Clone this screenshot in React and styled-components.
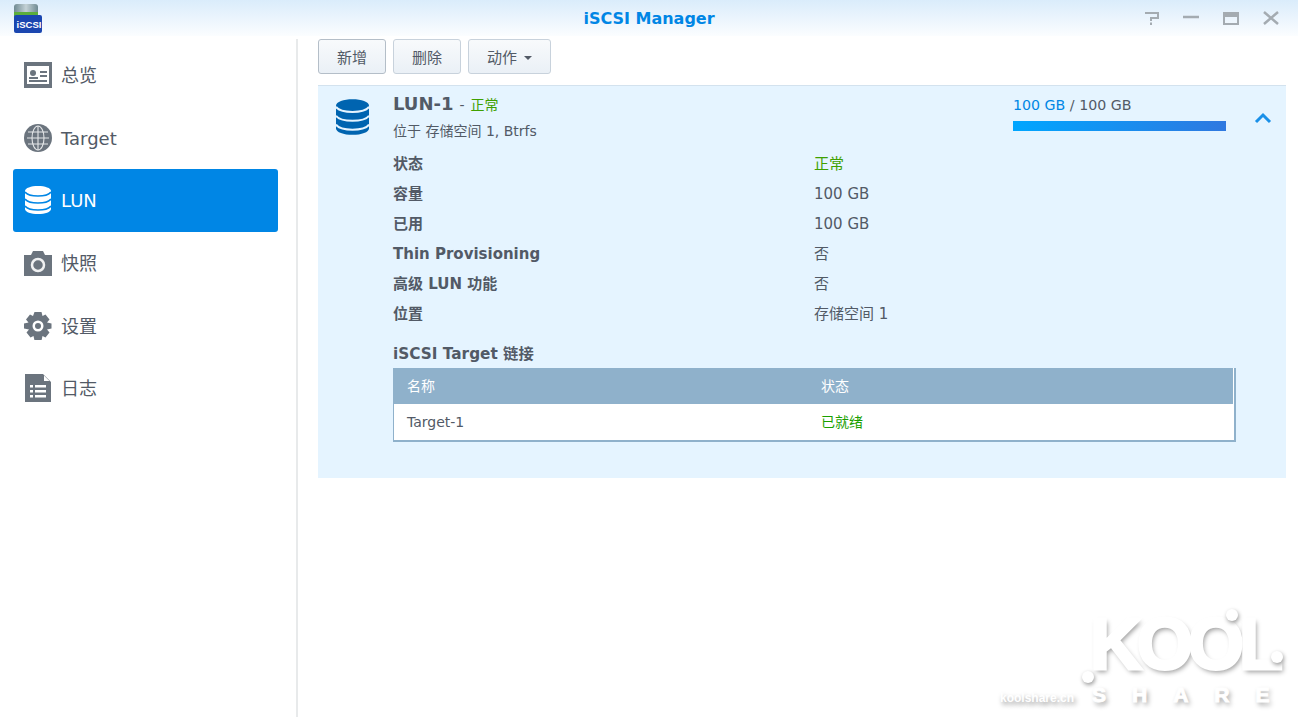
import React from "react";
import styled, { createGlobalStyle } from "styled-components";

const FONT = `"DejaVu Sans", "Noto Sans CJK SC", sans-serif`;

const GlobalStyle = createGlobalStyle`
  html, body {
    margin: 0;
    height: 100%;
    background: #fff;
    overflow: hidden;
  }
  body {
    font-family: ${FONT};
    color: #525a66;
  }
`;

const Window = styled.div`
  position: relative;
  width: 1298px;
  height: 717px;
  overflow: hidden;
  background: #fff;
`;

const TitleBar = styled.header`
  position: relative;
  height: 36px;
  display: flex;
  align-items: center;
  justify-content: center;
  background: linear-gradient(#daecfb, #fbfdff);
`;
const Title = styled.h1`
  margin: 0;
  font-size: 16px;
  font-weight: 700;
  color: #0086e5;
`;
const AppLogo = styled.svg`
  position: absolute;
  left: 13px;
  top: 4px;
`;
const WinButtons = styled.div`
  position: absolute;
  right: 19px;
  top: 11px;
  display: flex;
  gap: 24px;
`;

const Body = styled.div`
  display: flex;
  height: 681px;
`;
const Sidebar = styled.nav`
  flex: none;
  width: 298px;
  margin-top: 3px;
  padding: 5px 18px 0 13px;
  box-sizing: border-box;
  border-right: 2px solid #e8eaeb;
`;
const NavItem = styled.div`
  display: flex;
  align-items: center;
  gap: 9px;
  height: 62.6px;
  padding-left: 11px;
  border-radius: 3px;
  font-size: 18px;
  line-height: 24px;
  color: ${(p) => (p.$active ? "#fff" : "#525a66")};
  background: ${(p) => (p.$active ? "#0086e5" : "transparent")};
`;
const NavIcon = styled.span`
  display: flex;
  justify-content: center;
  width: 28px;
`;
const NavLabel = styled.span`
  padding-top: 2px;
`;

const Main = styled.main`
  flex: 1;
  padding: 3px 12px 0 20px;
  min-width: 0;
`;
const Toolbar = styled.div`
  display: flex;
  gap: 7px;
  margin-bottom: 11px;
`;
const Button = styled.button`
  height: 35px;
  width: ${(p) => p.$width}px;
  display: flex;
  align-items: center;
  justify-content: center;
  gap: 7px;
  padding: 0;
  font-family: ${FONT};
  font-size: 15px;
  color: #525a66;
  background: linear-gradient(#f8fafc, #eaf0f6);
  border: 1px solid ${(p) => (p.$primary ? "#b4bec8" : "#c8d2dc")};
  border-radius: 3px;
`;
const Caret = styled.span`
  width: 0;
  height: 0;
  margin-top: 3px;
  border-left: 4px solid transparent;
  border-right: 4px solid transparent;
  border-top: 4px solid #525a66;
`;

const Panel = styled.section`
  height: 393px;
  box-sizing: border-box;
  background: #e5f4ff;
  border-top: 1px solid #d3e2ee;
  display: grid;
  grid-template-columns: 75px 1fr;
`;
const PanelIcon = styled.div`
  padding: 12px 0 0 18px;
`;
const PanelContent = styled.div`
  position: relative;
  padding-top: 7px;
`;
const Heading = styled.div`
  display: flex;
  align-items: baseline;
  gap: 6px;
  height: 22px;
  font-size: 14px;
`;
const LunName = styled.span`
  font-size: 18px;
  font-weight: 700;
`;
const Green = styled.span`
  color: #3fa000;
`;
const SubHeading = styled.div`
  margin-top: 7px;
  height: 18px;
  font-size: 14px;
  line-height: 18px;
`;
const Usage = styled.div`
  position: absolute;
  left: 620px;
  top: 11px;
  width: 213px;
  font-size: 14.2px;
`;
const UsageUsed = styled.span`
  color: #0086e5;
`;
const UsageBar = styled.div`
  height: 10px;
  margin-top: 8px;
  background: linear-gradient(90deg, #00a6ff, #2f78e0);
`;
const Collapse = styled.svg`
  position: absolute;
  left: 861px;
  top: 26px;
`;
const InfoGrid = styled.dl`
  display: grid;
  grid-template-columns: 421px 1fr;
  grid-auto-rows: 30px;
  align-items: center;
  margin: 9px 0 0;
  font-size: 15px;
  line-height: 20px;
`;
const InfoLabel = styled.dt`
  font-weight: 700;
`;
const InfoValue = styled.dd`
  margin: 0;
  color: ${(p) => (p.$ok ? "#3fa000" : "inherit")};
`;
const SectionTitle = styled.h2`
  margin: 15px 0 4px;
  font-size: 15.300px;
  font-weight: 700;
  line-height: 20px;
`;
const Table = styled.div`
  width: 843px;
  box-sizing: border-box;
  background: #fff;
  border: solid #8fb1cb;
  border-width: 0 2px 2px 1px;
  font-size: 14px;
  line-height: 20px;
`;
const TableRow = styled.div`
  display: grid;
  grid-template-columns: 414px 1fr;
  align-items: center;
  height: 36px;
  margin-right: 1px;
  padding-left: 13px;
  color: ${(p) => (p.$head ? "#fff" : "inherit")};
  background: ${(p) => (p.$head ? "#8fb1cb" : "transparent")};
`;
const TableOk = styled.span`
  color: #1aa000;
`;

const Watermark = styled.div`
  position: absolute;
  left: 1000px;
  top: 606px;
  width: 290px;
  height: 105px;
  color: #fff;
  pointer-events: none;
  text-shadow: 2px 3px 5px rgba(0, 0, 0, 0.4);
`;
const WatermarkKool = styled.div`
  position: absolute;
  left: 90px;
  top: 0;
  font-family: "Liberation Sans", sans-serif;
  font-size: 72px;
  line-height: 76px;
  font-weight: 700;
  letter-spacing: -5px;
  -webkit-text-stroke: 3px #fff;
`;
const WatermarkShare = styled.div`
  position: absolute;
  left: 92px;
  top: 77px;
  font-family: "Liberation Sans", sans-serif;
  font-size: 21px;
  font-weight: 700;
  letter-spacing: 26px;
  white-space: nowrap;
  -webkit-text-stroke: 1px #fff;
`;
const WatermarkSite = styled.div`
  position: absolute;
  left: 0;
  top: 85px;
  font-family: "Liberation Sans", sans-serif;
  font-size: 12px;
  font-weight: 700;
`;
const Dot = styled.span`
  position: absolute;
  left: ${(p) => p.$x}px;
  top: ${(p) => p.$y}px;
  width: 12px;
  height: 12px;
  border-radius: 50%;
  background: #fff;
  box-shadow: 1px 2px 4px rgba(0, 0, 0, 0.4);
`;

function OverviewIcon() {
  return (
    <svg width="28" height="26" viewBox="0 0 28 26">
      <path fill="#6b747e" fillRule="evenodd" d="M0 0h28v26H0zM3 4v18h22V4z" />
      <circle cx="9" cy="11" r="3" fill="#6b747e" />
      <path fill="#6b747e" d="M5 15h9v2H5zM16 9h7v2h-7zM16 13h7v2h-7zM5 18h18v2H5z" />
    </svg>
  );
}
function GlobeIcon() {
  return (
    <svg width="28" height="28" viewBox="0 0 28 28">
      <circle cx="14" cy="14" r="14" fill="#6b747e" />
      <g fill="none" stroke="#e4e6e8" strokeWidth="1.1">
        <ellipse cx="14" cy="14" rx="6" ry="12" />
        <path d="M14 2v24M4 8h20M3 14h22M4 20h20" />
      </g>
    </svg>
  );
}
function DbIcon({ color, line, width = 26, height = 28 }) {
  return (
    <svg width={width} height={height} viewBox="0 0 26 28">
      <path fill={color} d="M0 5C0 2 6 0 13 0s13 2 13 5v18c0 3-6 5-13 5S0 26 0 23z" />
      <g fill="none" stroke={line} strokeWidth="1.6">
        <path d="M0 6c2 3 7 4 13 4s11-1 13-4" />
        <path d="M0 13c2 3 7 4 13 4s11-1 13-4" />
        <path d="M0 20c2 3 7 4 13 4s11-1 13-4" />
      </g>
    </svg>
  );
}
function CameraIcon() {
  return (
    <svg width="28" height="25" viewBox="0 0 28 25">
      <path fill="#6b747e" d="M0 4h7l2-4h10l2 4h7v21H0z" />
      <circle cx="14" cy="14" r="6" fill="none" stroke="#f0f1f2" strokeWidth="2.500" />
    </svg>
  );
}
function GearIcon() {
  return (
    <svg width="28" height="28" viewBox="0 0 28 28">
      <path
        fill="#6b747e"
        fillRule="evenodd"
        d="M10.5 0h7l1 4 3-1.500 4 5-2.500 3 4.500 1v5l-4.500 1 2.500 3-4 5-3-1.500-1 4.500h-7l-1-4.500-3 1.500-4-5 2.500-3L0 16.500v-5l4.500-1-2.500-3 4-5 3 1.500zM14 8.500a5.500 5.500 0 1 0 0 11 5.500 5.500 0 0 0 0-11z"
      />
      <circle cx="14" cy="14" r="3" fill="#6b747e" />
    </svg>
  );
}
function LogIcon() {
  return (
    <svg width="28" height="28" viewBox="0 0 28 28">
      <path fill="#6b747e" d="M1 0h18l8 8v20H1z" />
      <path fill="#fff" d="M20 1.500 25.500 7H20zM6 11h3v2.500H6zM11 11h11v2.500H11zM6 16h3v2.500H6zM11 16h11v2.500H11zM6 21h3v2.500H6zM11 21h11v2.500H11z" />
    </svg>
  );
}

const NAV = [
  { label: "总览", icon: <OverviewIcon /> },
  { label: "Target", icon: <GlobeIcon /> },
  { label: "LUN", icon: <DbIcon color="#fff" line="#0086e5" />, active: true },
  { label: "快照", icon: <CameraIcon /> },
  { label: "设置", icon: <GearIcon /> },
  { label: "日志", icon: <LogIcon /> },
];

const INFO = [
  ["状态", "正常", true],
  ["容量", "100 GB"],
  ["已用", "100 GB"],
  ["Thin Provisioning", "否"],
  ["高级 LUN 功能", "否"],
  ["位置", "存储空间 1"],
];

export default function App() {
  return (
    <Window>
      <GlobalStyle />
      <TitleBar>
        <AppLogo width="30" height="29" viewBox="0 0 30 29">
          <defs>
            <linearGradient id="cyl" x1="0" y1="0" x2="1" y2="0">
              <stop offset="0" stopColor="#6f8a92" />
              <stop offset="0.5" stopColor="#c4d2d6" />
              <stop offset="1" stopColor="#6f8a92" />
            </linearGradient>
          </defs>
          <rect x="1" y="0" width="24" height="13" rx="3" fill="url(#cyl)" />
          <rect x="1" y="8" width="24" height="5" fill="#5cae3c" />
          <rect x="1" y="11" width="28" height="18" rx="2" fill="#1a46b0" />
          <text x="16" y="24" textAnchor="middle" fontSize="9.500" fontWeight="700" fill="#fff" fontFamily="Liberation Sans">iSCSI</text>
        </AppLogo>
        <Title>iSCSI Manager</Title>
        <WinButtons>
          <svg width="16" height="14" viewBox="0 0 16 14" fill="none" stroke="#a4abb1" strokeWidth="2">
            <path d="M2 2h13v5H8v3" />
            <path d="M8 11.500V14" />
          </svg>
          <svg width="16" height="14" viewBox="0 0 16 14" fill="none" stroke="#a4abb1" strokeWidth="2.500">
            <path d="M0 6h16" />
          </svg>
          <svg width="16" height="14" viewBox="0 0 16 14" fill="none" stroke="#a4abb1" strokeWidth="2">
            <path d="M1 2h14v11H1z" />
            <path d="M1 4h14" strokeWidth="4" />
          </svg>
          <svg width="16" height="14" viewBox="0 0 16 14" fill="none" stroke="#a4abb1" strokeWidth="2.500">
            <path d="M1 1l14 12M15 1L1 13" />
          </svg>
        </WinButtons>
      </TitleBar>
      <Body>
        <Sidebar>
          {NAV.map((item) => (
            <NavItem key={item.label} $active={item.active}>
              <NavIcon>{item.icon}</NavIcon>
              <NavLabel>{item.label}</NavLabel>
            </NavItem>
          ))}
        </Sidebar>
        <Main>
          <Toolbar>
            <Button $width={68} $primary>新增</Button>
            <Button $width={68}>删除</Button>
            <Button $width={83}>动作<Caret /></Button>
          </Toolbar>
          <Panel>
            <PanelIcon>
              <DbIcon color="#0064b0" line="#e5f4ff" width={33} height={38} />
            </PanelIcon>
            <PanelContent>
              <Heading>
                <LunName>LUN-1</LunName>
                <span>-</span>
                <Green>正常</Green>
              </Heading>
              <SubHeading>位于 存储空间 1, Btrfs</SubHeading>
              <Usage>
                <UsageUsed>100 GB</UsageUsed> / 100 GB
                <UsageBar />
              </Usage>
              <Collapse width="18" height="12" viewBox="0 0 18 12" fill="none" stroke="#1a90e8" strokeWidth="3">
                <path d="M2 10l7-7 7 7" />
              </Collapse>
              <InfoGrid>
                {INFO.map(([label, value, ok]) => (
                  <React.Fragment key={label}>
                    <InfoLabel>{label}</InfoLabel>
                    <InfoValue $ok={ok}>{value}</InfoValue>
                  </React.Fragment>
                ))}
              </InfoGrid>
              <SectionTitle>iSCSI Target 链接</SectionTitle>
              <Table>
                <TableRow $head>
                  <span>名称</span>
                  <span>状态</span>
                </TableRow>
                <TableRow>
                  <span>Target-1</span>
                  <TableOk>已就绪</TableOk>
                </TableRow>
              </Table>
            </PanelContent>
          </Panel>
        </Main>
      </Body>
      <Watermark>
        <WatermarkKool>KOOL</WatermarkKool>
        <Dot $x={226} $y={3} />
        <Dot $x={82} $y={65} />
        <Dot $x={271} $y={45} />
        <WatermarkShare>SHARE</WatermarkShare>
        <WatermarkSite>koolshare.cn</WatermarkSite>
      </Watermark>
    </Window>
  );
}
